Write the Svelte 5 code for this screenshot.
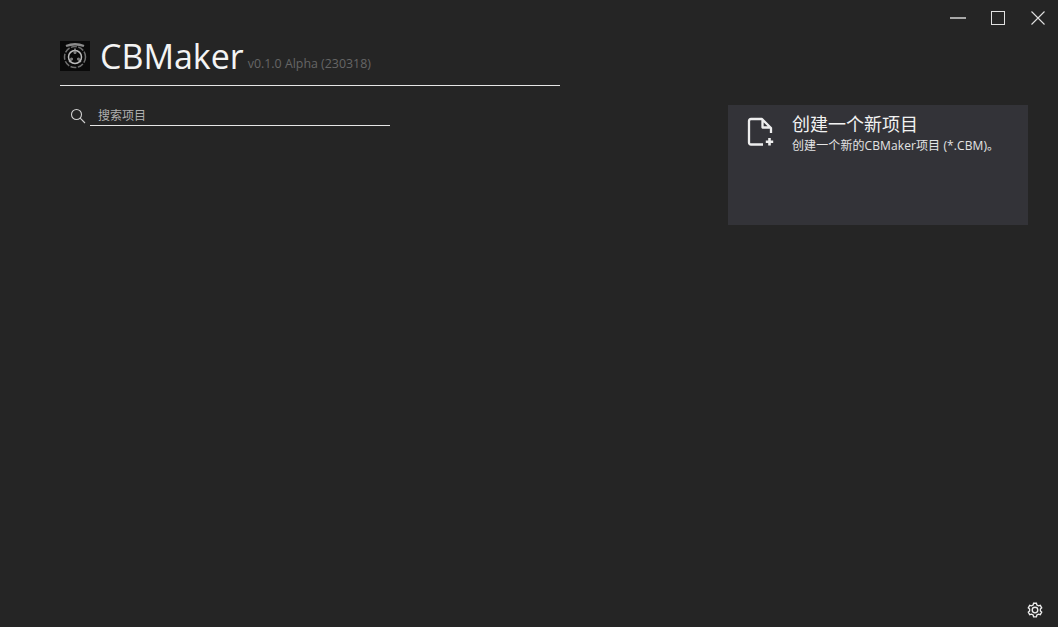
<script lang="ts">
	const title = 'CBMaker';
	const version = 'v0.1.0 Alpha (230318)';
</script>

<div class="window">
	<div class="titlebar">
		<button class="win-btn" aria-label="minimize">
			<svg width="16" height="16" viewBox="0 0 16 16"><path d="M0 8H16" stroke="#a8a8a8" stroke-width="2" /></svg>
		</button>
		<button class="win-btn" aria-label="maximize">
			<svg width="16" height="16" viewBox="0 0 16 16"><rect x="1.5" y="1.5" width="13" height="13" fill="none" stroke="#e0e0e0" /></svg>
		</button>
		<button class="win-btn" aria-label="close">
			<svg width="16" height="16" viewBox="0 0 16 16"><path d="M1.5 1.5L14.5 14.5M14.5 1.5L1.5 14.5" stroke="#e0e0e0" stroke-width="1.1" /></svg>
		</button>
	</div>

	<div class="main">
		<div class="left">
			<div class="brand">
				<svg class="logo" width="30" height="30" viewBox="0 0 30 30">
					<rect width="30" height="30" fill="#0a0a0a" />
					<path d="M6 5Q15 1.5 24 5" stroke="#8c8c8c" stroke-width="2.4" fill="none" />
					<circle cx="15" cy="16" r="10.5" fill="none" stroke="#6e6e6e" stroke-width="1.5" stroke-dasharray="6 1.5" />
					<circle cx="15" cy="16" r="6.5" fill="none" stroke="#bdbdbd" stroke-width="1.5" />
					<path d="M15 13V7.5M12.5 17.5L9 21M17.5 17.5L21 21" stroke="#a8a8a8" stroke-width="1.3" />
					<circle cx="15" cy="11.5" r="1.5" fill="#7a7a7a" />
					<circle cx="11.5" cy="18" r="1.5" fill="#7a7a7a" />
					<circle cx="18.5" cy="18" r="1.5" fill="#7a7a7a" />
				</svg>
				<span class="name">{title}</span>
				<span class="version">{version}</span>
			</div>
			<div class="search">
				<svg class="search-icon" width="16" height="16" viewBox="0 0 16 16">
					<circle cx="6.5" cy="6.5" r="5" fill="none" stroke="#d0d0d0" stroke-width="1.1" />
					<path d="M10.2 10.2L15 15" stroke="#d0d0d0" stroke-width="1.1" />
				</svg>
				<div class="search-box">搜索项目</div>
			</div>
		</div>

		<div class="card">
			<svg class="card-icon" width="28" height="32" viewBox="0 0 28 32">
				<path d="M16 27.5H4Q2 27.5 2 25.5V4Q2 2 4 2H15L24 11V16M15.5 3V10.5H23" fill="none" stroke="#eeeeee" stroke-width="2.3" stroke-linejoin="round" />
				<path d="M22.5 21V28.4M18.8 24.7H26.2" stroke="#eeeeee" stroke-width="2.6" />
			</svg>
			<div class="card-text">
				<div class="card-title">创建一个新项目</div>
				<div class="card-desc">创建一个新的CBMaker项目 (*.CBM)。</div>
			</div>
		</div>
	</div>

	<div class="footer">
		<svg width="16" height="16" viewBox="0 0 16 16">
			<path d="M6.6 1.2H9.4L9.9 3L11.5 3.9L13.3 3.4L14.7 5.8L13.4 7.1V8.9L14.7 10.2L13.3 12.6L11.5 12.1L9.9 13L9.4 14.8H6.6L6.1 13L4.5 12.1L2.7 12.6L1.3 10.2L2.6 8.9V7.1L1.3 5.8L2.7 3.4L4.5 3.9L6.1 3Z" fill="none" stroke="#ececec" stroke-width="1.35" />
			<circle cx="8" cy="8" r="2.8" fill="none" stroke="#ececec" stroke-width="1.35" />
		</svg>
	</div>
</div>

<style>
	:global(body) {
		background: #252525;
	}

	.window {
		height: 627px;
		display: flex;
		flex-direction: column;
		background: #252525;
		color: #fff;
		font-family: 'Open Sans', 'Noto Sans CJK SC', sans-serif;
		overflow: hidden;
	}

	.titlebar {
		display: flex;
		justify-content: flex-end;
		height: 36px;
		flex: none;
	}

	.win-btn {
		width: 40px;
		height: 36px;
		padding: 0;
		display: flex;
		align-items: center;
		justify-content: center;
		background: none;
		border: none;
	}

	.main {
		flex: 1;
		display: flex;
		justify-content: space-between;
		align-items: flex-start;
		padding: 0 30px 0 60px;
	}

	.left {
		width: 500px;
	}

	.brand {
		display: flex;
		align-items: flex-end;
		height: 49px;
		border-bottom: 1px solid #e6e6e6;
	}

	.logo {
		margin: 5px 10px 14px 0;
		flex: none;
	}

	.name {
		font-size: 34px;
		line-height: 42px;
		margin-bottom: 8px;
		color: #f4f4f4;
	}

	.version {
		font-size: 12.4px;
		line-height: 16px;
		margin: 0 0 13px 4px;
		color: #666;
	}

	.search {
		display: flex;
		align-items: flex-start;
		margin-top: 19px;
		padding-left: 10px;
		gap: 4px;
	}

	.search-icon {
		margin-top: 3px;
	}

	.search-box {
		width: 292px;
		padding: 1px 0 0 8px;
		height: 19px;
		line-height: 20px;
		font-size: 12px;
		color: #b0b0b0;
		border-bottom: 1px solid #e6e6e6;
	}

	.card {
		width: 300px;
		height: 120px;
		margin-top: 69px;
		display: flex;
		background: #333338;
	}

	.card-icon {
		margin: 12px 0 0 19px;
		flex: none;
	}

	.card-text {
		margin: 6px 0 0 17px;
	}

	.card-title {
		font-size: 18px;
		line-height: 26px;
		color: #f2f2f2;
	}

	.card-desc {
		font-size: 12px;
		line-height: 17px;
		letter-spacing: 0.1px;
		color: #e4e4e4;
	}

	.footer {
		height: 32px;
		flex: none;
		display: flex;
		justify-content: flex-end;
		padding: 7px 15px 0 0;
		box-sizing: border-box;
	}
</style>
